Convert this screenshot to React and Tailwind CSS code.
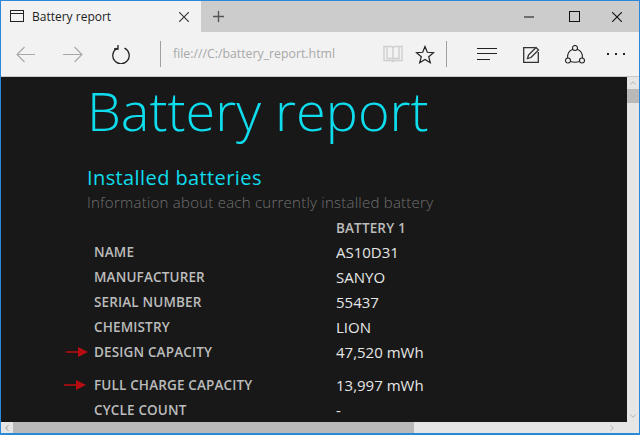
import { ChevronLeft, ChevronRight, ChevronUp, ChevronDown } from 'lucide-react';

const rows = [
  { name: 'NAME', value: 'AS10D31' },
  { name: 'MANUFACTURER', value: 'SANYO' },
  { name: 'SERIAL NUMBER', value: '55437' },
  { name: 'CHEMISTRY', value: 'LION' },
  { name: 'DESIGN CAPACITY', value: '47,520 mWh', arrow: 'left-[-28px] top-[7px]', height: 'h-[33px]' },
  { name: 'FULL CHARGE CAPACITY', value: '13,997 mWh', arrow: 'left-[-30px] top-[7px]' },
  { name: 'CYCLE COUNT', value: '-' },
];

const RedArrow = ({ className }) => (
  <svg width="22" height="10" viewBox="0 0 22 10" className={`absolute ${className}`}>
    <path d="M0 5h13" stroke="#b50d12" strokeWidth="1.6" />
    <path d="M12 0l10 5-10 5z" fill="#b50d12" />
  </svg>
);

const Cross = ({ size, color }) => (
  <svg width={size} height={size} viewBox={`0 0 ${size} ${size}`} stroke={color} strokeWidth="1.1">
    <path d={`M0 0L${size} ${size}M${size} 0L0 ${size}`} />
  </svg>
);

const App = () => {
  return (
    <div className="w-[640px] h-[435px] flex flex-col overflow-hidden border-x-[1px] border-t-[1px] border-b-[2px] border-[#2b88d8] font-['Open_Sans','Liberation_Sans',sans-serif]">
      {/* Tab strip */}
      <div className="h-[31px] flex bg-[#cccccc] shrink-0">
        <div className="w-[200px] bg-[#f2f2f2] flex items-center pl-[9px] pr-[12px]">
          <svg width="15" height="13" viewBox="0 0 15 13" fill="none" stroke="#222" strokeWidth="1">
            <rect x="0.5" y="0.5" width="13" height="11" />
            <path d="M0.5 3.5h13" />
          </svg>
          <span className="ml-[7px] mt-[1px] text-[12px] text-[#222] flex-1">Battery report</span>
          <Cross size={10} color="#333" />
        </div>
        <div className="ml-[12px] flex items-center">
          <svg width="11" height="11" viewBox="0 0 11 11" stroke="#555" strokeWidth="1.4">
            <path d="M5.500 0v11M0 5.500h11" />
          </svg>
        </div>
        <div className="flex-1 flex items-center justify-end pr-[17px]">
          <svg width="10" height="2" viewBox="0 0 10 2" stroke="#111" strokeWidth="1">
            <path d="M0 1h10" />
          </svg>
          <svg className="ml-[35px]" width="11" height="11" viewBox="0 0 11 11" fill="none" stroke="#111" strokeWidth="1">
            <rect x="0.5" y="0.5" width="10" height="10" />
          </svg>
          <div className="ml-[32px]"><Cross size={10} color="#111" /></div>
        </div>
      </div>

      {/* Toolbar */}
      <div className="h-[45px] flex items-center bg-[#f2f2f2] border-b border-[#c8c8c8] shrink-0">
        <svg className="ml-[15px]" width="19" height="17" viewBox="0 0 19 17" fill="none" stroke="#a8a8a8" strokeWidth="1.1">
          <path d="M19 8.500H1M8.500 1L1 8.500 8.500 16" />
        </svg>
        <svg className="ml-[28px]" width="20" height="17" viewBox="0 0 20 17" fill="none" stroke="#a8a8a8" strokeWidth="1.1">
          <path d="M0 8.500h19M11.500 1L19 8.500 11.500 16" />
        </svg>
        <svg className="ml-[29px]" width="18" height="19" viewBox="0 0 18 19" fill="none" stroke="#222" strokeWidth="1.3">
          <path d="M5.500 3.200A8.200 8.200 0 1 0 12.500 3.200" />
          <path d="M6 0v4H2" />
        </svg>
        <div className="ml-[30px] w-px h-[26px] bg-[#a0a0a0]" />
        <span className="ml-[12px] w-[210px] text-[12.300px] text-[#a8a8a8] whitespace-nowrap">file:///C:/battery_report.html</span>
        <svg width="20" height="18" viewBox="0 0 20 18" fill="none" stroke="#cfcfcf" strokeWidth="1.4">
          <path d="M1 1.500h7c1 0 2 .5 2 1.500 0-1 1-1.500 2-1.500h7v14h-7l-2 1-2-1H1z" />
          <path d="M4 1.500v12h6l6 0v-12M10 3v13" />
        </svg>
        <svg className="ml-[12px]" width="20" height="19" viewBox="0 0 20 19" fill="none" stroke="#222" strokeWidth="1.2">
          <path d="M10 1.500l2.300 5.800 6.200.4-4.800 4 1.600 6L10 14.400l-5.300 3.300 1.600-6-4.800-4 6.200-.4z" />
        </svg>
        <div className="ml-[11px] w-px h-[26px] bg-[#a0a0a0]" />
        <svg className="ml-[30px]" width="20" height="12" viewBox="0 0 20 12" fill="none" stroke="#222" strokeWidth="1">
          <path d="M0 .5h20M0 5.500h20M0 11.500h13" />
        </svg>
        <svg className="ml-[26px]" width="17" height="17" viewBox="0 0 17 17" fill="none" stroke="#333" strokeWidth="1.3">
          <path d="M12 1.700H.7v14.600h14.600V6" />
          <path d="M4.500 12.500l1-3.500 7.500-7.500 2.500 2.500L8 11.500z" />
        </svg>
        <svg className="ml-[25px]" width="20" height="19" viewBox="0 0 20 19" fill="none" stroke="#222" strokeWidth="1.1">
          <circle cx="10" cy="3" r="2.500" />
          <circle cx="3" cy="15.500" r="2.500" />
          <circle cx="17" cy="15.500" r="2.500" />
          <path d="M7.800 4.300C4.500 5.500 2.300 9 2.600 13M12.200 4.300C15.500 5.500 17.700 9 17.400 13M5.500 16.500c3 1 6 1 9 0" />
        </svg>
        <div className="ml-[22px] flex gap-[6px]">
          <div className="w-[2px] h-[2px] bg-[#222]" />
          <div className="w-[2px] h-[2px] bg-[#222]" />
          <div className="w-[2px] h-[2px] bg-[#222]" />
        </div>
      </div>

      {/* Page area */}
      <div className="flex-1 min-h-0 flex flex-col">
        <div className="flex-1 min-h-0 flex">
          <div className="flex-1 min-w-0 bg-[#181818] pl-[86px]">
            <h1 className="h-[66px] text-[54px] leading-[66px] font-light text-[#0fdcec] whitespace-nowrap">Battery report</h1>
            <h2 className="mt-[22px] h-[26px] text-[20px] leading-[26px] font-normal text-[#0fdcec] tracking-[0.4px]">Installed batteries</h2>
            <p className="mt-[1px] h-[20px] text-[15px] leading-[20px] font-light text-[#707070] tracking-[0.24px]">Information about each currently installed battery</p>
            <div className="pl-[7px] mt-[4px]">
              <div className="h-[24px] flex items-center">
                <div className="w-[242px]" />
                <span className="font-semibold text-[13.500px] tracking-[0.15px] text-[#bcbcbc]">BATTERY 1</span>
              </div>
              {rows.map((row) => (
                <div key={row.name} className={`relative flex items-start leading-[25px] ${row.height ?? 'h-[25px]'}`}>
                  {row.arrow && <RedArrow className={row.arrow} />}
                  <span className="w-[242px] font-semibold text-[13.500px] tracking-[0.15px] text-[#bcbcbc] whitespace-nowrap">{row.name}</span>
                  <span className="text-[15px] text-[#e6e6e6]">{row.value}</span>
                </div>
              ))}
            </div>
          </div>

          {/* Vertical scrollbar */}
          <div className="w-[12px] bg-[#e6e6e6] flex flex-col items-center shrink-0">
            <ChevronUp size={10} color="#aaa" className="my-[1px]" />
            <div className="w-full h-[14px] bg-[#b9b9b9]" />
            <div className="flex-1" />
            <ChevronDown size={10} color="#aaa" className="my-[1px]" />
          </div>
        </div>

        {/* Horizontal scrollbar */}
        <div className="h-[11px] flex items-center bg-[#e6e6e6] shrink-0">
          <div className="w-[12px] flex justify-center"><ChevronLeft size={10} color="#888" /></div>
          <div className="w-[401px] h-full bg-[#b9b9b9]" />
          <div className="flex-1" />
          <div className="w-[32px] flex justify-start"><ChevronRight size={10} color="#aaa" /></div>
        </div>
      </div>
    </div>
  );
};

export default App;
